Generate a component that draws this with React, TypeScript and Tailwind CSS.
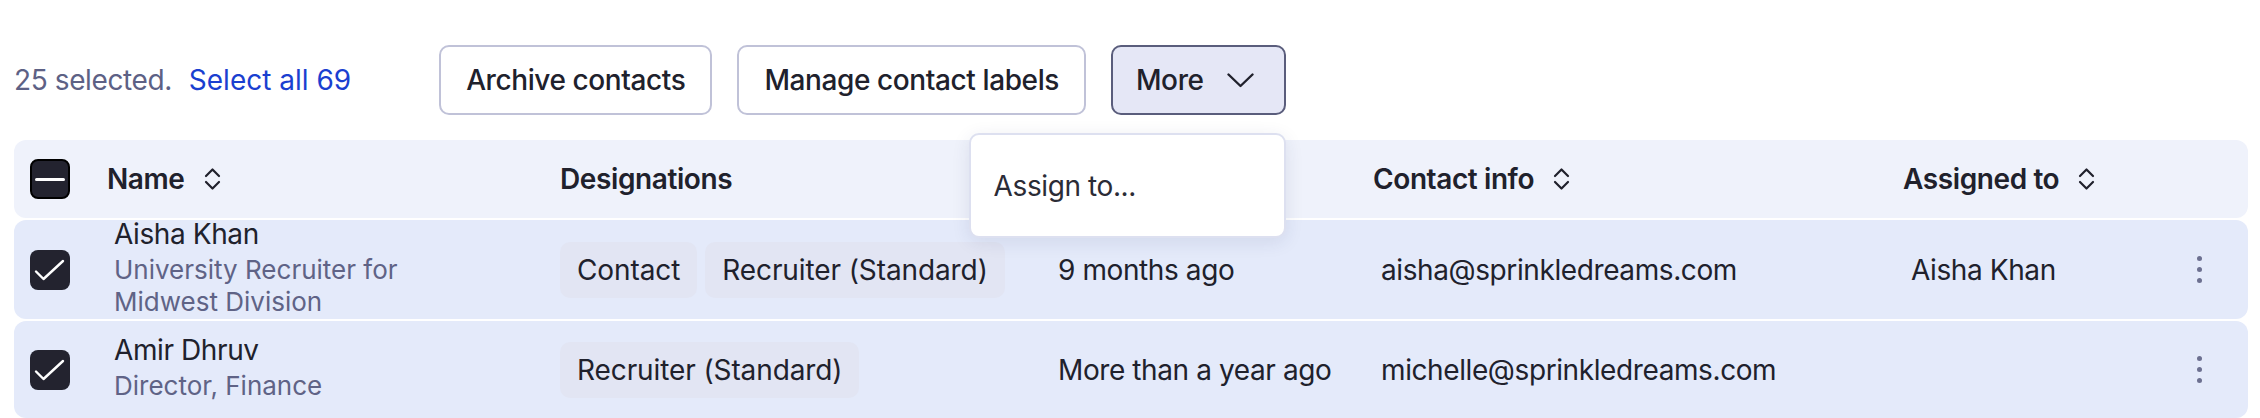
import React from 'react'

type Contact = {
  name: string
  title: string
  labels: string[]
  lastSeen: string
  email: string
  assignee: string
}

const CONTACTS: Contact[] = [
  {
    name: 'Aisha Khan',
    title: 'University Recruiter for Midwest Division',
    labels: ['Contact', 'Recruiter (Standard)'],
    lastSeen: '9 months ago',
    email: 'aisha@sprinkledreams.com',
    assignee: 'Aisha Khan',
  },
  {
    name: 'Amir Dhruv',
    title: 'Director, Finance',
    labels: ['Recruiter (Standard)'],
    lastSeen: 'More than a year ago',
    email: 'michelle@sprinkledreams.com',
    assignee: '',
  },
]

const SortIcon = () => (
  <svg width="21" height="26" viewBox="0 0 21 26" fill="none" className="shrink-0">
    <path d="M4 10 L10.5 3.5 L17 10" stroke="#20212c" strokeWidth="2.2" strokeLinecap="round" strokeLinejoin="round" />
    <path d="M4 16 L10.5 22.5 L17 16" stroke="#20212c" strokeWidth="2.2" strokeLinecap="round" strokeLinejoin="round" />
  </svg>
)

const Checkbox = ({ mixed }: { mixed?: boolean }) => (
  <div
    className={`w-[40px] h-[40px] rounded-[8px] bg-[#23232f] flex items-center justify-center ${
      mixed ? 'border-2 border-black' : ''
    }`}
  >
    {mixed ? (
      <div className="w-[30px] h-[3px] bg-white rounded-full" />
    ) : (
      <svg width="40" height="40" viewBox="0 0 40 40" fill="none">
        <path d="M6 21.5 L13.5 29 L33 11" stroke="white" strokeWidth="2.4" strokeLinecap="round" strokeLinejoin="round" />
      </svg>
    )}
  </div>
)

const HeaderCell = ({ label, sortable, className = '' }: { label: string; sortable?: boolean; className?: string }) => (
  <div className={`shrink-0 flex items-center gap-[17px] ${className}`}>
    <span className="font-semibold">{label}</span>
    {sortable && <SortIcon />}
  </div>
)

const Kebab = () => (
  <div className="flex flex-col gap-[6px]">
    <span className="w-[5px] h-[5px] rounded-full bg-[#6c7090]" />
    <span className="w-[5px] h-[5px] rounded-full bg-[#6c7090]" />
    <span className="w-[5px] h-[5px] rounded-full bg-[#6c7090]" />
  </div>
)

export default function App() {
  return (
    <div className="w-full h-[418px] overflow-hidden bg-white pt-[45px] pl-[14px] pr-[12px] font-['Inter','Noto_Sans',sans-serif] text-[28px] tracking-[-0.4px] text-[#20212c]">
      {/* bulk action toolbar */}
      <div className="flex items-center h-[70px]">
        <span className="text-[#5d6185]">25 selected.</span>
        <button className="ml-[17px] text-[#1a3fd0] tracking-normal">Select all 69</button>
        <div className="ml-[88px] flex items-center gap-[25px]">
          <button className="h-[70px] px-[25px] border-2 border-[#c0c2d8] rounded-[10px] bg-white font-medium">
            Archive contacts
          </button>
          <button className="h-[70px] px-[25px] border-2 border-[#c0c2d8] rounded-[10px] bg-white font-medium">
            Manage contact labels
          </button>
          <div className="relative">
            <button className="h-[70px] pl-[23px] pr-[30px] border-2 border-[#5a5d7c] rounded-[10px] bg-[#e5e7f6] font-medium flex items-center gap-[23px]">
              More
              <svg width="27" height="15" viewBox="0 0 27 15" fill="none">
                <path d="M1.5 1.5 L13.5 13 L25.5 1.5" stroke="#20212c" strokeWidth="2.4" strokeLinecap="round" strokeLinejoin="round" />
              </svg>
            </button>
            <div className="absolute right-0 top-[88px] z-10 w-[317px] h-[105px] bg-white border-2 border-[#dde0f0] rounded-[10px] shadow-[0_4px_18px_rgba(40,50,100,0.10)] flex items-center pl-[23px] text-[#2b2c36]">
              Assign to...
            </div>
          </div>
        </div>
      </div>

      {/* table */}
      <div className="mt-[25px] flex flex-col gap-[2px]">
        <div className="h-[78px] rounded-[12px] bg-[#eff2fb] flex items-center">
          <div className="w-[93px] shrink-0 pl-[16px]">
            <Checkbox mixed />
          </div>
          <HeaderCell label="Name" sortable className="w-[453px]" />
          <HeaderCell label="Designations" className="w-[498px]" />
          <HeaderCell label="Last seen" className="w-[315px]" />
          <HeaderCell label="Contact info" sortable className="w-[530px]" />
          <HeaderCell label="Assigned to" sortable className="w-[267px]" />
        </div>

        {CONTACTS.map((c, i) => (
          <div
            key={c.email}
            className={`${i === 0 ? 'h-[99px]' : 'h-[97px]'} rounded-[12px] bg-[#e4eafa] flex items-center`}
          >
            <div className="w-[93px] shrink-0 pl-[16px]">
              <Checkbox />
            </div>
            <div className="w-[453px] shrink-0 pl-[7px] pb-[7px]">
              <div className="leading-[40px]">{c.name}</div>
              <div className="max-w-[340px] text-[26px] leading-[32px] tracking-normal text-[#5f6386]">{c.title}</div>
            </div>
            <div className="w-[498px] shrink-0 flex items-center gap-[8px]">
              {c.labels.map(label => (
                <span
                  key={label}
                  className="h-[56px] px-[17px] rounded-[10px] bg-[#e2e5f3] flex items-center whitespace-nowrap tracking-[-0.1px]"
                >
                  {label}
                </span>
              ))}
            </div>
            <div className="w-[315px] shrink-0">{c.lastSeen}</div>
            <div className="w-[530px] shrink-0 pl-[8px]">{c.email}</div>
            <div className="w-[267px] shrink-0 pl-[8px]">{c.assignee}</div>
            <div className="flex-1 pl-[27px]">
              <Kebab />
            </div>
          </div>
        ))}
      </div>
    </div>
  )
}
